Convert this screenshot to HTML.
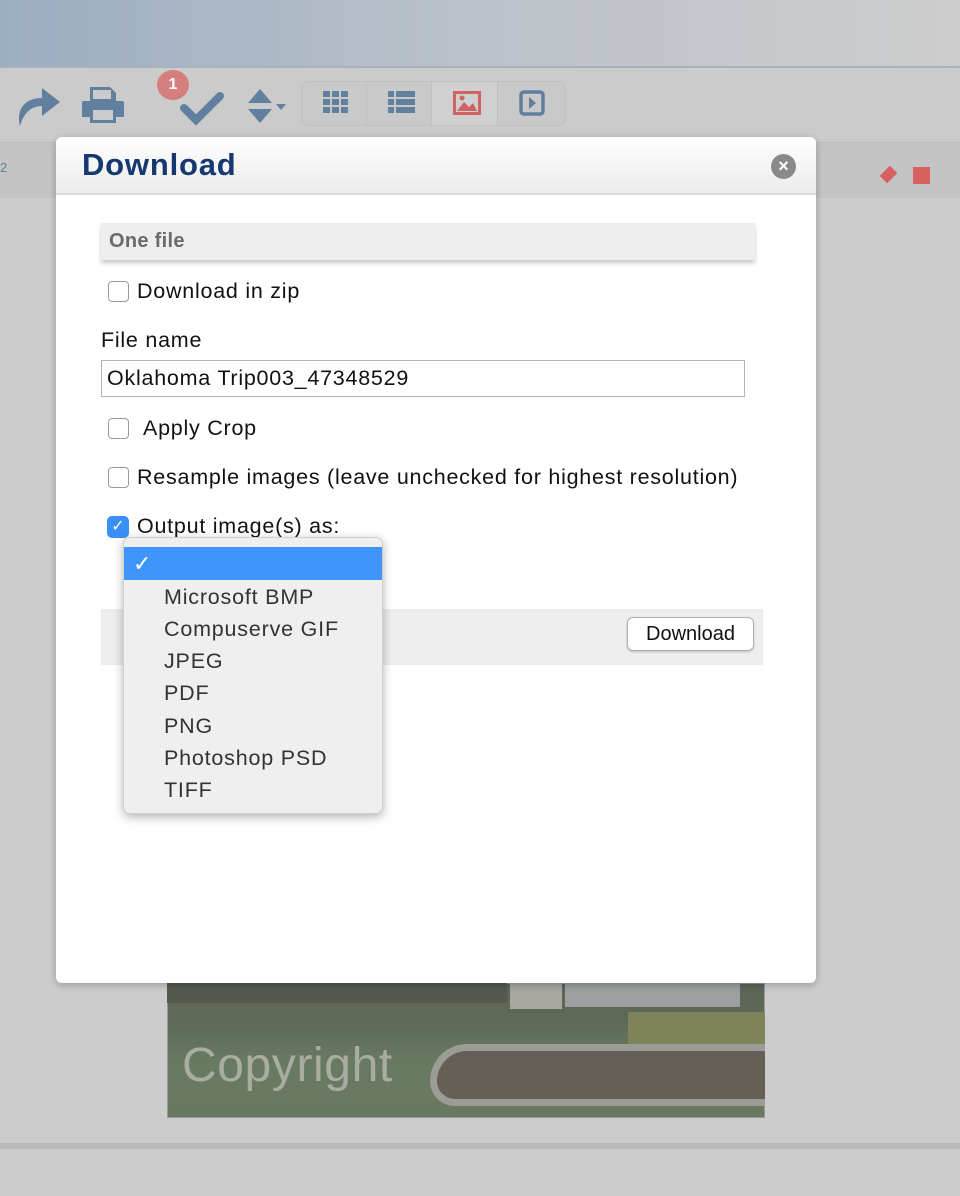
<!DOCTYPE html>
<html><head><meta charset="utf-8"><style>
*{margin:0;padding:0;box-sizing:border-box}
body{width:960px;height:1196px;overflow:hidden;background:#cccccc;font-family:"Liberation Sans",Arial,sans-serif;position:relative}
.abs{position:absolute}
.top{left:0;top:0;width:960px;height:68px;background:linear-gradient(90deg,#9badc2,#bcc2ca 50%,#cdcdcd);border-bottom:2px solid #a8b2be}
.tb{left:0;top:70px;width:960px;height:72px;background:#cbcbcb}
.strip{left:0;top:142px;width:960px;height:56px;background:#c4c4c4;border-top:1px solid #bdbdbd}
.grp{left:301px;top:81px;width:265px;height:45px;border:1px solid #c0c0c0;border-radius:8px;background:#c9c9c9}
.grp div{position:absolute;top:0;height:43px;border-right:1px solid #c0c0c0}
.dlg{left:56px;top:137px;width:760px;height:846px;background:#fff;border-radius:6px;box-shadow:0 2px 8px rgba(0,0,0,.25);overflow:hidden}
.hdr{left:0;top:0;width:760px;height:58px;background:linear-gradient(#fff,#ececec);border-bottom:2px solid #dcdcdc}
.hdr h1{position:absolute;left:26px;top:10px;font-size:31px;font-weight:bold;color:#14386f;letter-spacing:0.8px}
.cb{width:21px;height:21px;border:1px solid #9a9a9a;border-radius:4px;background:#fff}
.t{font-size:21.5px;color:#111;letter-spacing:0.75px}
.dd{left:123px;top:537px;width:260px;height:277px;background:#efefef;border-radius:7px;box-shadow:0 3px 10px rgba(0,0,0,.3);border:1px solid #d0d0d0}
.dd .it{position:absolute;left:40px;font-size:21.5px;color:#333;letter-spacing:0.8px}
</style></head><body>
<div class="abs top"></div>
<div class="abs tb"></div>
<svg class="abs" style="left:14px;top:82px" width="50" height="46" viewBox="0 0 50 46"><path d="M6 44 C2 28 10 16 28 16 L28 6 L46 20 L28 34 L28 24 C18 24 10 30 6 44Z" fill="#61809f"/></svg>
<svg class="abs" style="left:80px;top:85px" width="46" height="42" viewBox="0 0 46 42"><path d="M10 2 H30 L36 8 V16 H10Z M4 16 H42 Q44 16 44 18 V32 H36 V38 H10 V32 H2 V18 Q2 16 4 16Z" fill="#61809f"/><rect x="13" y="25" width="20" height="10" fill="#cbcbcb"/><rect x="13" y="5" width="18" height="9" fill="#cbcbcb"/></svg>
<div class="abs" style="left:157px;top:70px;width:32px;height:30px;border-radius:50%;background:#d57e7e;color:#fff;font-size:16px;font-weight:bold;text-align:center;line-height:30px">1</div>
<svg class="abs" style="left:180px;top:90px" width="44" height="36" viewBox="0 0 44 36"><path d="M4 18 L16 30 L40 6" stroke="#61809f" stroke-width="8" fill="none" stroke-linecap="round"/></svg>
<svg class="abs" style="left:244px;top:87px" width="50" height="40" viewBox="0 0 50 40"><path d="M4 16 L16 2 L28 16Z M4 22 L28 22 L16 36Z" fill="#61809f"/><path d="M32 17 L42 17 L37 23Z" fill="#61809f"/></svg>
<div class="abs grp"><div style="left:0;width:65px"></div><div style="left:65px;width:65px"></div><div style="left:130px;width:66px;background:#d0d0d0"></div></div>
<svg class="abs" style="left:323px;top:91px" width="26" height="24"><g fill="#61809f"><rect x="0" y="0" width="7" height="6"/><rect x="9" y="0" width="7" height="6"/><rect x="18" y="0" width="7" height="6"/><rect x="0" y="8" width="7" height="6"/><rect x="9" y="8" width="7" height="6"/><rect x="18" y="8" width="7" height="6"/><rect x="0" y="16" width="7" height="6"/><rect x="9" y="16" width="7" height="6"/><rect x="18" y="16" width="7" height="6"/></g></svg>
<svg class="abs" style="left:388px;top:91px" width="28" height="24"><g fill="#61809f"><rect x="0" y="0" width="6" height="6"/><rect x="8" y="0" width="19" height="6"/><rect x="0" y="8" width="6" height="6"/><rect x="8" y="8" width="19" height="6"/><rect x="0" y="16" width="6" height="6"/><rect x="8" y="16" width="19" height="6"/></g></svg>
<svg class="abs" style="left:453px;top:91px" width="28" height="24"><rect x="1.5" y="1.5" width="25" height="21" fill="none" stroke="#d06464" stroke-width="3"/><path d="M4 20 L11 11 L16 16 L20 12 L24 20Z" fill="#d06464"/><circle cx="9" cy="7" r="2.5" fill="#d06464"/></svg>
<svg class="abs" style="left:519px;top:90px" width="26" height="26"><rect x="2" y="2" width="22" height="22" rx="3" fill="none" stroke="#61809f" stroke-width="3.5"/><path d="M10 7 L17 13 L10 19Z" fill="#61809f"/></svg>
<div class="abs strip"></div>
<div class="abs" style="left:0;top:160px;font-size:13px;color:#61809f">2</div>
<div class="abs" style="left:882px;top:168px;width:13px;height:13px;background:#d86060;transform:rotate(45deg) scale(.8,1.1)"></div>
<div class="abs" style="left:913px;top:167px;width:17px;height:17px;background:#d86060"></div>

<div class="abs" style="left:167px;top:983px;width:598px;height:135px;background:linear-gradient(180deg,#5e6458 0,#5f6a58 30%,#697a62 60%,#6a7862);border:1px solid #999"></div>
<div class="abs" style="left:167px;top:983px;width:340px;height:20px;background:#545a50"></div>
<div class="abs" style="left:510px;top:983px;width:52px;height:26px;background:#a8a8a0"></div>
<div class="abs" style="left:565px;top:983px;width:175px;height:24px;background:#9ea0a0"></div>
<div class="abs" style="left:628px;top:1012px;width:137px;height:48px;background:#7e8358"></div>
<div class="abs" style="left:430px;top:1044px;width:335px;height:62px;border:7px solid #9c9c96;border-right:none;border-radius:60px 0 0 40px;background:#665f58"></div>
<div class="abs" style="left:182px;top:1038px;font-size:48px;color:#a9ad9f;letter-spacing:0.6px">Copyright</div>
<div class="abs" style="left:0;top:1143px;width:960px;height:6px;background:#bbbbbb"></div>

<div class="abs dlg">
 <div class="abs hdr"><h1>Download</h1>
 <div class="abs" style="left:715px;top:17px;width:25px;height:25px;border-radius:50%;background:#8a8a8a;color:#fff;font-size:18px;font-weight:bold;text-align:center;line-height:25px">×</div></div>
</div>
<div class="abs" style="left:101px;top:223px;width:654px;height:37px;background:#eeeeee;box-shadow:0 3px 4px rgba(0,0,0,.22)"></div>
<div class="abs" style="left:109px;top:230px;font-size:20px;font-weight:bold;color:#6a6a6a;letter-spacing:0.3px">One file</div>
<div class="abs cb" style="left:108px;top:281px"></div>
<div class="abs t" style="left:137px;top:279px">Download in zip</div>
<div class="abs t" style="left:101px;top:328px">File name</div>
<div class="abs" style="left:101px;top:360px;width:644px;height:37px;border:1px solid #b5b5b5"></div>
<div class="abs t" style="left:107px;top:366px">Oklahoma Trip003_47348529</div>
<div class="abs cb" style="left:108px;top:418px"></div>
<div class="abs t" style="left:143px;top:416px">Apply Crop</div>
<div class="abs cb" style="left:108px;top:467px"></div>
<div class="abs t" style="left:137px;top:465px">Resample images (leave unchecked for highest resolution)</div>
<div class="abs" style="left:107px;top:516px;width:22px;height:22px;border-radius:5px;background:#3a8ff5;color:#fff;font-size:16px;text-align:center;line-height:22px">✓</div>
<div class="abs t" style="left:137px;top:514px">Output image(s) as:</div>
<div class="abs" style="left:101px;top:609px;width:662px;height:56px;background:#eeeeee"></div>
<div class="abs" style="left:627px;top:617px;width:127px;height:34px;border:1px solid #b0b0b0;border-radius:6px;background:#fff;box-shadow:0 1px 2px rgba(0,0,0,.2);font-size:20px;text-align:center;line-height:32px;color:#111">Download</div>
<div class="abs dd">
 <div class="abs" style="left:0;top:9px;width:258px;height:33px;background:#3f95f9;color:#fff;font-size:22px;padding-left:9px;line-height:33px">✓</div>
 <div class="it" style="top:47px">Microsoft BMP</div>
 <div class="it" style="top:79px">Compuserve GIF</div>
 <div class="it" style="top:111px">JPEG</div>
 <div class="it" style="top:143px">PDF</div>
 <div class="it" style="top:176px">PNG</div>
 <div class="it" style="top:208px">Photoshop PSD</div>
 <div class="it" style="top:240px">TIFF</div>
</div>
</body></html>
